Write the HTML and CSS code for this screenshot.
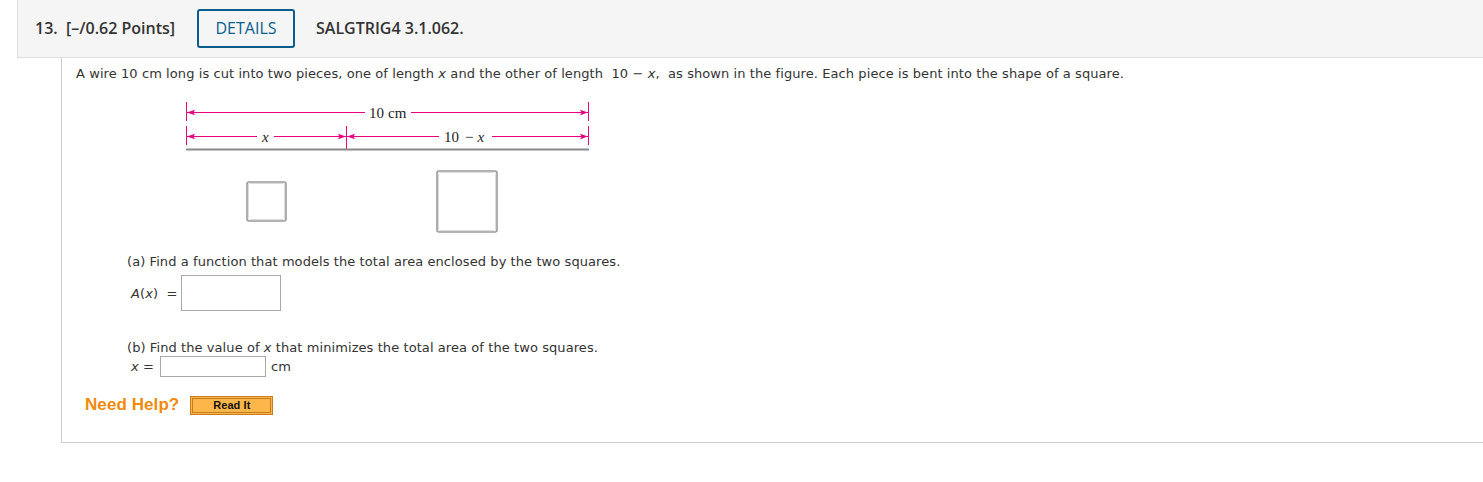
FILE: index.html
```html
<!DOCTYPE html>
<html>
<head>
<meta charset="utf-8">
<link rel="stylesheet" href="styles.css">
</head>
<body>
<div class="question">
  <div class="qhead">
    <span class="qnum">13.</span>
    <span class="qpts">[–/0.62 Points]</span>
    <span class="details">DETAILS</span>
    <span class="qid">SALGTRIG4 3.1.062.</span>
  </div>
  <div class="qbody">
    <p class="intro">A wire 10 cm long is cut into two pieces, one of length <i>x</i> and the other of length&nbsp; 10 − <i>x</i>,&nbsp; as shown in the figure. Each piece is bent into the shape of a square.</p>
    <svg class="figure" width="420" height="140" viewBox="0 0 420 140">
      <g stroke="#e8007f" stroke-width="1" fill="none">
        <line x1="7.5" y1="4" x2="7.5" y2="23"/>
        <line x1="409.5" y1="4" x2="409.5" y2="23"/>
        <line x1="7.5" y1="28" x2="7.5" y2="47"/>
        <line x1="409.5" y1="28" x2="409.5" y2="47"/>
        <line x1="167.5" y1="28" x2="167.5" y2="51"/>
        <line x1="8" y1="14.5" x2="186" y2="14.5"/>
        <line x1="232" y1="14.5" x2="409" y2="14.5"/>
        <line x1="8" y1="38.5" x2="78" y2="38.5"/>
        <line x1="95" y1="38.5" x2="167" y2="38.5"/>
        <line x1="168" y1="38.5" x2="260" y2="38.5"/>
        <line x1="313" y1="38.5" x2="409" y2="38.5"/>
      </g>
      <g fill="#e8007f">
        <path d="M8 14.5 L16 11.8 L14.5 14.5 L16 17.2 Z"/>
        <path d="M409 14.5 L401 11.8 L402.5 14.5 L401 17.2 Z"/>
        <path d="M8 38.5 L16 35.8 L14.5 38.5 L16 41.2 Z"/>
        <path d="M167 38.5 L159 35.8 L160.5 38.5 L159 41.2 Z"/>
        <path d="M168 38.5 L176 35.8 L174.5 38.5 L176 41.2 Z"/>
        <path d="M409 38.5 L401 35.8 L402.5 38.5 L401 41.2 Z"/>
      </g>
      <text x="190" y="19.5" class="ftxt">10 cm</text>
      <text x="83" y="43.5" class="ftxt fit">x</text>
      <text x="265" y="43.5" class="ftxt">10 <tspan dx="2">−</tspan><tspan dx="4" class="fit">x</tspan></text>
      <line x1="7" y1="51.5" x2="410" y2="51.5" stroke="#8a8a8a" stroke-width="2"/>
      <rect x="68" y="84" width="39" height="39" rx="2" fill="none" stroke="#9a9a9a" stroke-width="1.6"/>
      <rect x="69.5" y="85.5" width="36" height="36" rx="1" fill="none" stroke="#dcdcdc" stroke-width="1"/>
      <rect x="258" y="73" width="60" height="61" rx="2" fill="none" stroke="#9a9a9a" stroke-width="1.6"/>
      <rect x="259.5" y="74.5" width="57" height="58" rx="1" fill="none" stroke="#dcdcdc" stroke-width="1"/>
    </svg>
    <div class="part">
      <p class="ptext">(a) Find a function that models the total area enclosed by the two squares.</p>
      <div class="ansrow rowa">
        <span class="lbl"><i>A</i>(<i>x</i>) &nbsp;=</span>
        <span class="inbox big"></span>
      </div>
    </div>
    <div class="part partb">
      <p class="ptext">(b) Find the value of <i>x</i> that minimizes the total area of the two squares.</p>
      <div class="ansrow rowb">
        <span class="lbl"><i>x</i> =</span>
        <span class="inbox small"></span>
        <span class="unit">cm</span>
      </div>
    </div>
    <div class="help">
      <span class="needhelp">Need Help?</span>
      <span class="readit"><span class="readin">Read It</span></span>
    </div>
  </div>
</div>
</body>
</html>
```
FILE: styles.css
```css
html, body {
  margin: 0;
  padding: 0;
  background: #ffffff;
}
.question {
  margin-left: 17px;
}
.qhead {
  box-sizing: border-box;
  height: 58px;
  padding-bottom: 2px;
  background: #f5f5f5;
  border-left: 1px solid #dedede;
  border-bottom: 1px solid #dedede;
  display: flex;
  align-items: center;
  font-family: "Open Sans", sans-serif;
  font-weight: 600;
  font-size: 16px;
  color: #333333;
}
.qnum {
  margin-left: 17px;
  width: 31px;
}
.qpts {
  width: 131px;
}
.details {
  box-sizing: border-box;
  width: 98px;
  height: 39px;
  border: 2px solid #0b5d8e;
  border-radius: 3px;
  display: flex;
  align-items: center;
  justify-content: center;
  color: #0b5d8e;
  font-weight: 400;
  font-size: 16px;
  margin-top: 1px;
}
.qid {
  margin-left: 21px;
}
.qbody {
  margin-left: 44px;
  border-left: 1px solid #cccccc;
  border-bottom: 1px solid #cccccc;
  padding: 0 0 27px 14px;
  font-family: "DejaVu Sans", Verdana, sans-serif;
  font-size: 13px;
  letter-spacing: 0.08px;
  color: #333333;
}
.intro {
  margin: 0;
  padding-top: 8px;
  line-height: 16px;
}
.figure {
  display: block;
  margin: 16px 0 0 103px;
}
.ftxt {
  font-family: "Liberation Serif", serif;
  font-size: 15px;
  fill: #222222;
}
.fit {
  font-style: italic;
}
.part {
  padding-left: 51px;
}
.part:first-of-type {
  margin-top: 16px;
}
.ptext {
  margin: 0;
  line-height: 16px;
}
.ansrow {
  display: flex;
  align-items: center;
}
.rowa {
  margin-top: 5px;
  padding-left: 4px;
}
.rowa .lbl {
  width: 50px;
}
.inbox {
  box-sizing: border-box;
  display: block;
  border: 1px solid #a9a9a9;
  background: #ffffff;
}
.big {
  width: 100px;
  height: 36px;
}
.partb {
  margin-top: 29px;
}
.rowb {
  margin-top: 0px;
  padding-left: 4px;
}
.rowb .lbl {
  width: 29px;
}
.small {
  width: 106px;
  height: 21px;
}
.unit {
  margin-left: 5px;
}
.help {
  display: flex;
  align-items: center;
  margin-top: 18px;
  margin-left: 9px;
}
.needhelp {
  font-family: "Liberation Sans", Arial, sans-serif;
  font-weight: bold;
  font-size: 17px;
  color: #f08a0c;
}
.readit {
  margin-left: 11px;
  box-sizing: border-box;
  width: 83px;
  height: 19px;
  background: #fdb64a;
  border: 1px solid #cc7a1e;
  padding: 1px;
  display: flex;
}
.readin {
  flex: 1;
  border: 1px solid #c77a20;
  display: flex;
  align-items: center;
  justify-content: center;
  font-family: "Liberation Sans", Arial, sans-serif;
  font-weight: bold;
  font-size: 11px;
  color: #111111;
}
```
